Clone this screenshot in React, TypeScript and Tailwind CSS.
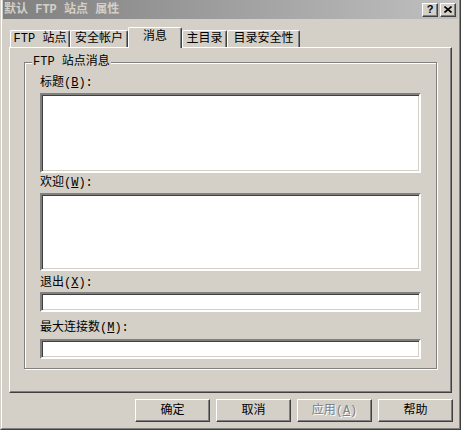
const FONT = "font-['Liberation_Mono','Noto_Sans_CJK_SC',monospace]";

const tabs = [
    { label: "FTP 站点", cls: "w-[60px]", active: false },
    { label: "安全帐户", cls: "w-[58px]", active: false },
    { label: "消息", cls: "w-[54px]", active: true },
    { label: "主目录", cls: "w-[45px]", active: false },
    { label: "目录安全性", cls: "w-[73px]", active: false },
];

function Field({ className }: { className: string }) {
    return (
        <div
            className={`bg-white border-2 border-t-[#808080] border-l-[#808080] border-r-white border-b-white shadow-[inset_1px_1px_0_#404040,inset_-1px_-1px_0_#d4d0c8] ${className}`}
        />
    );
}

function Label({ text, hotkey, className }: { text: string; hotkey: string; className: string }) {
    return (
        <div className={`h-[14px] leading-[14px] text-[12px] text-black whitespace-pre ${className}`}>
            {text}(<span className="underline">{hotkey}</span>):
        </div>
    );
}

function Button({ children, disabled }: { children: React.ReactNode; disabled?: boolean }) {
    return (
        <div
            className={`w-[75px] h-[23px] flex items-center justify-center text-[12px] bg-[#d4d0c8] border-t border-l border-t-white border-l-white border-r border-b border-r-[#404040] border-b-[#404040] shadow-[inset_-1px_-1px_0_#808080] ${
                disabled ? "text-[#808080] [text-shadow:1px_1px_0_#fff]" : "text-black"
            }`}
        >
            {children}
        </div>
    );
}

export default function App() {
    return (
        <div
            className={`w-[461px] h-[430px] bg-[#d4d0c8] border-l border-r border-b border-l-[#d4d0c8] border-r-[#404040] border-b-[#404040] ${FONT}`}
        >
            <div className="h-full flex flex-col border-l border-r border-b border-l-white border-r-[#808080] border-b-[#808080] px-px pb-px">
                {/* Title bar */}
                <div className="h-[19px] shrink-0 flex items-center bg-linear-to-r from-[#808080] to-[#c0c0c0] pl-px pr-[2px]">
                    <span className="text-[12px] font-bold text-[#d4d0c8] whitespace-pre leading-[14px]">
                        默认 FTP 站点 属性
                    </span>
                    <div className="ml-auto flex gap-[2px]">
                        <div className="w-[16px] h-[14px] flex items-center justify-center bg-[#d4d0c8] border-t border-l border-t-white border-l-white border-r border-b border-r-[#404040] border-b-[#404040] shadow-[inset_-1px_-1px_0_#808080] text-[11px] font-bold leading-none text-black font-['Liberation_Sans',sans-serif]">
                            ?
                        </div>
                        <div className="w-[16px] h-[14px] flex items-center justify-center bg-[#d4d0c8] border-t border-l border-t-white border-l-white border-r border-b border-r-[#404040] border-b-[#404040] shadow-[inset_-1px_-1px_0_#808080]">
                            <svg width="8" height="7" viewBox="0 0 8 7">
                                <path d="M0.5 0.5 L7.5 6.5 M7.5 0.5 L0.5 6.5" stroke="#000" strokeWidth="1.6" />
                            </svg>
                        </div>
                    </div>
                </div>

                {/* Tabs */}
                <div className="mt-[8px] h-[20px] shrink-0 flex items-end pl-[7px]">
                    {tabs.map((t) =>
                        t.active ? (
                            <div
                                key={t.label}
                                className={`${t.cls} relative z-10 -mb-px h-[21px] pb-[3px] flex items-center justify-center bg-[#d4d0c8] border-t border-l border-t-white border-l-white border-r border-r-[#404040] shadow-[inset_-1px_0_0_#808080] rounded-t-[2px] text-[12px] text-black whitespace-pre`}
                            >
                                {t.label}
                            </div>
                        ) : (
                            <div
                                key={t.label}
                                className={`${t.cls} h-[17px] flex items-center justify-center border-t border-l border-t-white border-l-white border-r border-r-[#404040] shadow-[inset_-1px_0_0_#808080] rounded-t-[2px] text-[12px] text-black whitespace-pre`}
                            >
                                {t.label}
                            </div>
                        )
                    )}
                </div>

                {/* Tab panel */}
                <div className="ml-[6px] w-[443px] h-[346px] shrink-0 border-t border-l border-t-white border-l-white border-r border-b border-r-[#404040] border-b-[#404040] shadow-[inset_-1px_-1px_0_#808080] pl-[14px] pt-[14px]">
                    <div className="relative w-[413px] h-[307px] border border-[#808080] shadow-[inset_1px_1px_0_#fff,1px_1px_0_#fff] px-[15px] pt-[13px] flex flex-col">
                        <span className="absolute left-[7px] top-[-8px] px-px bg-[#d4d0c8] text-[12px] leading-[14px] text-black whitespace-pre">
                            FTP 站点消息
                        </span>
                        <Label text="标题" hotkey="B" className="" />
                        <Field className="mt-[3px] h-[80px]" />
                        <Label text="欢迎" hotkey="W" className="mt-[3px]" />
                        <Field className="mt-[3px] h-[78px]" />
                        <Label text="退出" hotkey="X" className="mt-[5px]" />
                        <Field className="mt-[2px] h-[20px]" />
                        <Label text="最大连接数" hotkey="M" className="mt-[9px]" />
                        <Field className="mt-[4px] h-[20px]" />
                    </div>
                </div>

                {/* Buttons */}
                <div className="mt-[6px] flex justify-end gap-[6px] pr-[5px]">
                    <Button>确定</Button>
                    <Button>取消</Button>
                    <Button disabled>
                        应用(<span className="underline">A</span>)
                    </Button>
                    <Button>帮助</Button>
                </div>
            </div>
        </div>
    );
}
